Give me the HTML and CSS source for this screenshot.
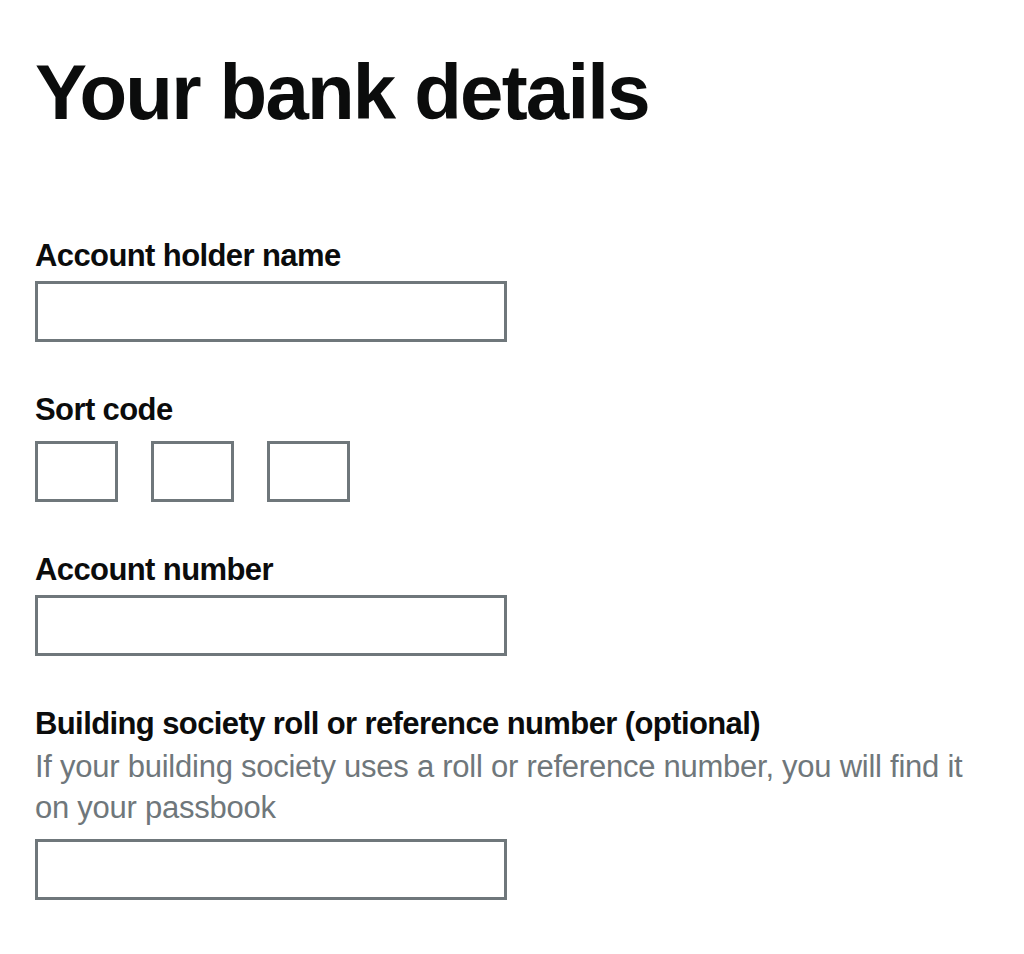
FILE: index.html
```html
<!DOCTYPE html>
<html lang="en">
<head>
<meta charset="UTF-8">
<meta name="viewport" content="width=device-width, initial-scale=1.0">
<title>Your bank details</title>
<link rel="stylesheet" href="styles.css">
</head>
<body>

<main class="page">
  <h1 class="heading">Your bank details</h1>

  <form id="bank-form">
    <div class="form-group">
      <label class="label" for="account-name">Account holder name</label>
      <input class="input" type="text" id="account-name" name="account-name">
    </div>

    <fieldset class="form-group fieldset">
      <legend class="label legend">Sort code</legend>
      <div class="sort-code">
        <input class="input input-short" type="text" name="sort-1" aria-label="Sort code part 1">
        <input class="input input-short" type="text" name="sort-2" aria-label="Sort code part 2">
        <input class="input input-short" type="text" name="sort-3" aria-label="Sort code part 3">
      </div>
    </fieldset>

    <div class="form-group">
      <label class="label" for="account-number">Account number</label>
      <input class="input" type="text" id="account-number" name="account-number">
    </div>

    <div class="form-group">
      <label class="label label-hinted" for="roll-number">Building society roll or reference number (optional)</label>
      <span class="hint">If your building society uses a roll or reference number, you will find it on your passbook</span>
      <input class="input" type="text" id="roll-number" name="roll-number">
    </div>
  </form>
</main>

</body>
</html>
```

FILE: styles.css
```css
body {
  font-family: "Liberation Sans", Arial, sans-serif;
  background-color: #fff;
  color: #0b0c0c;
  margin: 0;
  padding: 0;
}

.page {
  padding: 52px 35px 0;
}

.heading {
  font-size: 78px;
  line-height: 81px;
  font-weight: bold;
  letter-spacing: -1.8px;
  margin: 0 0 102px;
}

.form-group {
  margin: 0 0 47px;
}

.fieldset {
  border: none;
  padding: 0;
  min-width: 0;
}

.label {
  display: block;
  font-size: 31px;
  line-height: 41px;
  font-weight: bold;
  letter-spacing: -0.6px;
  margin-bottom: 5px;
}

.label-hinted {
  margin-bottom: 2px;
}

.legend {
  padding: 0;
  margin-bottom: 11px;
}

.hint {
  display: block;
  font-size: 31px;
  line-height: 41px;
  color: #6f777b;
  letter-spacing: -0.25px;
  margin-bottom: 11px;
}

.input {
  display: block;
  box-sizing: border-box;
  width: 472px;
  height: 61px;
  padding: 8px;
  border: 3px solid #6f777b;
  border-radius: 0;
  background: #fff;
  font-family: inherit;
  font-size: 31px;
  margin: 0;
}

.input:focus {
  outline: 5px solid #ffbf47;
}

.sort-code {
  display: flex;
  gap: 33px;
}

.input-short {
  width: 83px;
}
```
